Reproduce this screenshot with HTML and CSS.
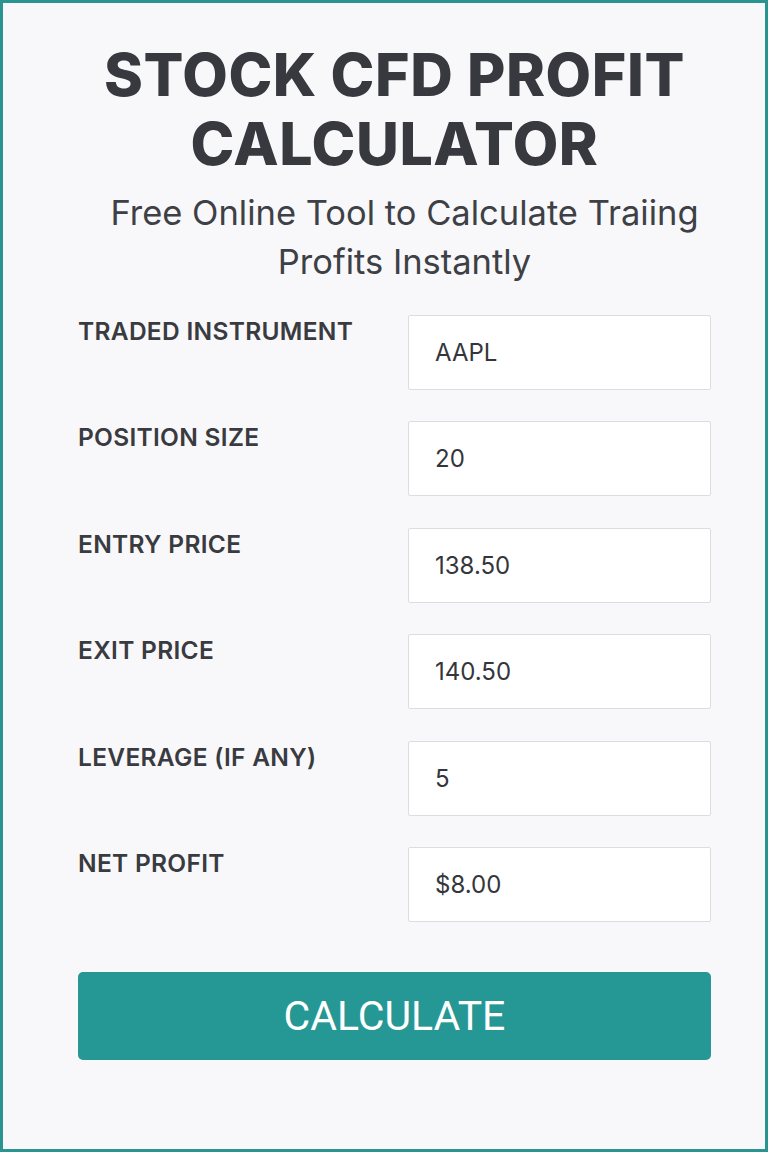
FILE: index.html
```html
<!DOCTYPE html>
<html lang="en">
<head>
  <meta charset="UTF-8" />
  <meta name="viewport" content="width=device-width, initial-scale=1.0"/>
  <title>Stock CFD Profit Calculator</title>
  <link rel="stylesheet" href="styles.css">
</head>
<body>
  <div class="page">
    <h1 class="title">STOCK CFD PROFIT CALCULATOR</h1>
    <p class="subtitle">Free Online Tool to Calculate Traiing Profits Instantly</p>

    <form class="calc" onsubmit="return false;">
      <div class="row">
        <label for="instrument">TRADED INSTRUMENT</label>
        <input id="instrument" type="text" value="AAPL">
      </div>
      <div class="row">
        <label for="size">POSITION SIZE</label>
        <input id="size" type="text" value="20">
      </div>
      <div class="row">
        <label for="entry">ENTRY PRICE</label>
        <input id="entry" type="text" value="138.50">
      </div>
      <div class="row">
        <label for="exit">EXIT PRICE</label>
        <input id="exit" type="text" value="140.50">
      </div>
      <div class="row">
        <label for="leverage">LEVERAGE (IF ANY)</label>
        <input id="leverage" type="text" value="5">
      </div>
      <div class="row">
        <label for="profit">NET PROFIT</label>
        <input id="profit" type="text" value="$8.00" readonly>
      </div>

      <button class="btn" type="button" onclick="calculate()">CALCULATE</button>
    </form>
  </div>

  <script>
    function calculate() {
      const size = parseFloat(document.getElementById("size").value) || 0;
      const entry = parseFloat(document.getElementById("entry").value) || 0;
      const exit = parseFloat(document.getElementById("exit").value) || 0;
      const profit = (exit - entry) * size / 5;
      document.getElementById("profit").value = "$" + profit.toFixed(2);
    }
  </script>
</body>
</html>
```

FILE: styles.css
```css
:root {
  --teal: #259795;
  --text: #3a3c41;
  --bg: #f8f8fb;
}

html, body {
  margin: 0;
  height: 100%;
}

body {
  font-family: Inter, "Noto Sans", sans-serif;
  color: var(--text);
  background: var(--bg);
}

.page {
  box-sizing: border-box;
  min-height: 100vh;
  border: 3px solid #2a9491;
  padding: 37px 54px 0 75px;
}

.title {
  margin: 0;
  font-size: 59px;
  font-weight: 800;
  line-height: 69px;
  text-align: center;
  letter-spacing: 0.6px;
  color: #37393e;
}

.subtitle {
  margin: 10px auto 0;
  max-width: 620px;
  padding-left: 20px;
  font-size: 34.5px;
  line-height: 49px;
  text-align: center;
  color: #3d4045;
}

.calc {
  margin-top: 29px;
}

.row {
  display: flex;
  justify-content: space-between;
  align-items: flex-start;
  height: 75px;
  margin-bottom: 31.4px;
}

.row label {
  padding-top: 1px;
  font-size: 24.5px;
  font-weight: 600;
  letter-spacing: 0.3px;
  color: #393b40;
}

.row input {
  box-sizing: border-box;
  width: 303px;
  height: 75px;
  padding: 0 26px;
  border: 1px solid #dcdde0;
  border-radius: 2px;
  background: #fff;
  font-family: inherit;
  font-size: 24px;
  color: #34363b;
}

.btn {
  display: block;
  width: 100%;
  height: 88px;
  margin-top: 50px;
  border: none;
  border-radius: 5px;
  background: var(--teal);
  color: #fff;
  font-family: Roboto, "Noto Sans", sans-serif;
  font-size: 41px;
  cursor: pointer;
}
```
